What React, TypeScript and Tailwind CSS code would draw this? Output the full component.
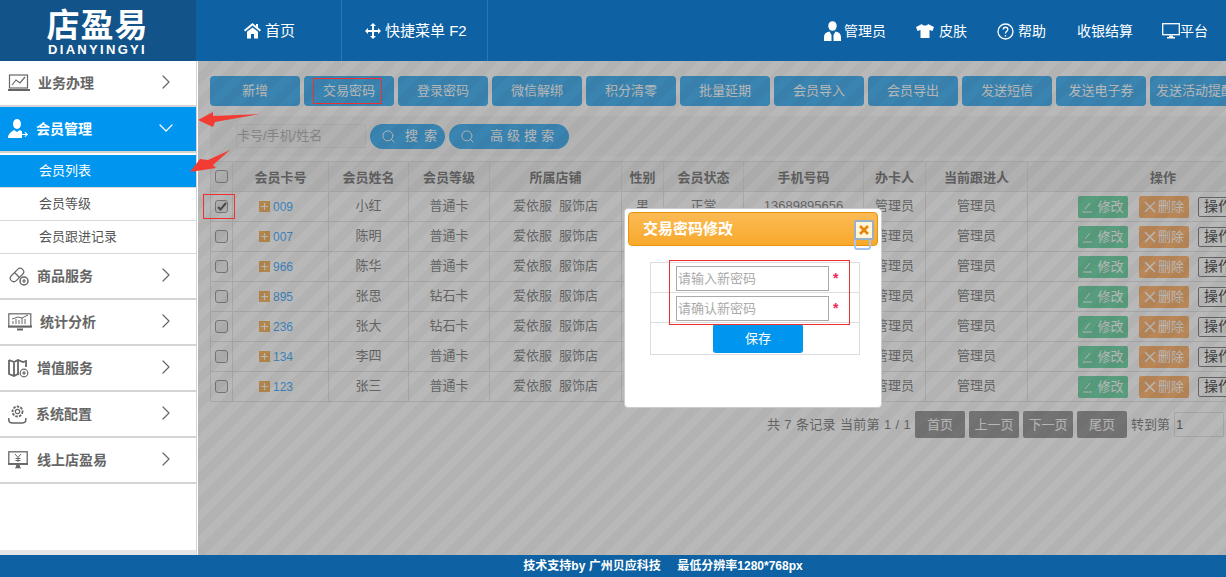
import React from "react";
import { ChevronRight, ChevronDown, Search } from "lucide-react";

const font = "font-['Liberation_Sans','Noto_Sans_CJK_SC',sans-serif]";

const HomeI = () => (
  <svg width="17" height="16" viewBox="0 0 17 16" fill="white"><path d="M8.5 0 0 7l1.2 1.4L8.5 2.6l7.3 5.8L17 7l-3-2.5V1h-2v1.9z" /><path d="M8.5 4.4 3 8.8V15.5h4V11h3v4.5h4V8.8z" /></svg>
);
const MoveI = () => (
  <svg width="16" height="16" viewBox="0 0 16 16" fill="white"><path d="M8 0 5 3h2v4H3V5L0 8l3 3V9h4v4H5l3 3 3-3H9V9h4v2l3-3-3-3v2H9V3h2z" /></svg>
);
const AdminI = () => (
  <svg width="17" height="20" viewBox="0 0 17 20" fill="white"><ellipse cx="8.5" cy="5" rx="4.2" ry="4.8" /><path d="M0 20v-4c0-3 2-5 5.5-5.5L7.5 14v6zM17 20v-4c0-3-2-5-5.5-5.5L9.500 14v6z" /></svg>
);
const ShirtI = () => (
  <svg width="18" height="14" viewBox="0 0 18 14" fill="white"><path d="M6 0 0 3l1.500 4L4.500 6v8h9V6l3 1L18 3l-6-3c-.5 2-5.500 2-6 0z" /></svg>
);
const HelpI = () => (
  <svg width="17" height="17" viewBox="0 0 17 17" fill="none" stroke="white"><circle cx="8.500" cy="8.500" r="7.500" strokeWidth="1.300" /><path d="M6.200 6.500c.2-3 4.600-3 4.600 0 0 1.800-2.300 1.800-2.300 4M8.500 12v1.500" strokeWidth="1.300" /></svg>
);
const MonitorI = () => (
  <svg width="18" height="16" viewBox="0 0 18 16" fill="none" stroke="white"><rect x=".7" y=".7" width="16.600" height="11" strokeWidth="1.300" /><path d="M7 12.500h4v1.500h2v1.500H5V14h2z" fill="white" stroke="none" /></svg>
);

const s = { fill: "none", stroke: "#666", strokeWidth: 1.2 };
const ChartI = () => (
  <svg width="22" height="18" viewBox="0 0 22 18" {...s}><rect x="1.500" y="1" width="18" height="13" /><path d="M4 11l4-5 4 3 5-6" /><path d="M0 16h22" strokeWidth="2" /></svg>
);
const MemberI = () => (
  <svg width="20" height="20" viewBox="0 0 20 20" fill="white"><ellipse cx="9" cy="5" rx="4" ry="5" /><path d="M0 19c0-4 3-6 6-8l3 2 3-2 2 1.500V19z" /><path d="M14 15h4l-1.500-1.500.7-.7L20 15.500 17.200 18l-.7-.7 1.500-1.300h-4z" /></svg>
);
const PillI = () => (
  <svg width="21" height="20" viewBox="0 0 21 20" {...s}>
    <rect x="1" y="5.500" width="16" height="7" rx="3.500" transform="rotate(-45 9 9)" />
    <path d="M6.500 6.500l5 5" />
    <circle cx="16" cy="15" r="4" fill="white" strokeWidth="1.500" />
    <path d="M16 13v4M14 15h4" />
  </svg>
);
const ScreenI = () => (
  <svg width="24" height="18" viewBox="0 0 24 18" {...s}><rect x=".8" y=".8" width="22" height="13" /><path d="M5 11V8M8 11V6M11 11V7M14 11V5M17 11V6M4 6l6-2 4 1 6-3" strokeWidth="1" /><path d="M0 13.500h24" strokeWidth="2" /><path d="M9 16.500h6" strokeWidth="2" /></svg>
);
const MapI = () => (
  <svg width="21" height="20" viewBox="0 0 21 20" fill="none" stroke="#666" strokeWidth="1.800"><path d="M1 2l5 2 4-2 5 2 3-1v6M1 2v14l5 2 4-2 1 .5M6 4v14M10 2v14" /><circle cx="16" cy="15" r="3.800" fill="white" strokeWidth="1.200" /><path d="M16 13v4M14 15h4" strokeWidth="1.200" /></svg>
);
const GearI = () => (
  <svg width="19" height="19" viewBox="0 0 19 19" {...s}><circle cx="9.500" cy="6.500" r="2.200" /><circle cx="9.500" cy="6.500" r="5" strokeDasharray="2.500 1.200" strokeWidth="1.800" /><path d="M.8 13v2c0 2 2 3 4 3h9c2 0 4-1 4-3v-2" strokeWidth="1.500" /></svg>
);
const YenI = () => (
  <svg width="20" height="18" viewBox="0 0 20 18" fill="none" stroke="#666" strokeWidth="1.300"><rect x=".8" y=".8" width="18.400" height="12" /><path d="M0 13h20" strokeWidth="1.800" /><path d="M7 3l3 3.500L13 3M10 6.500V11M7.500 7.500h5M7.500 9.500h5" strokeWidth="1" /><path d="M7 16.800h6M8.500 14.500h3v2h-3z" fill="#666" strokeWidth="1" /></svg>
);

const NavItem = ({ icon, label, gap, active }: { icon: React.ReactNode; label: string; gap: string; active?: boolean }) => (
  <div className={`h-[46px] shrink-0 flex items-center border-b-2 border-[#d4d4d4] pl-2 pr-[18px] ${active ? "bg-[#0096f0] text-white" : "text-[#666]"}`}>
    <span className="w-[24px] flex justify-start">{icon}</span>
    <span className={`${gap} flex-1 text-[14px] font-bold leading-none`}>{label}</span>
    <span className="mb-[3px]">
      {active ? <ChevronDown size={24} strokeWidth={1.200} color="white" /> : <ChevronRight size={24} strokeWidth={1.200} color="#666" />}
    </span>
  </div>
);

const SubItem = ({ label, active }: { label: string; active?: boolean }) => (
  <div className={`h-[33px] shrink-0 flex items-center pl-[39px] text-[13px] border-b border-[#d9d9d9] ${active ? "bg-[#0096f0] text-white border-[#0096f0]" : "text-[#555]"}`}>{label}</div>
);

const toolbar = ["新增", "交易密码", "登录密码", "微信解绑", "积分清零", "批量延期", "会员导入", "会员导出", "发送短信", "发送电子券", "发送活动提醒"];
const heads = ["会员卡号", "会员姓名", "会员等级", "所属店铺", "性别", "会员状态", "手机号码", "办卡人", "当前跟进人", "操作"];
const rows = [
  ["009", "小红", "普通卡"],
  ["007", "陈明", "普通卡"],
  ["966", "陈华", "普通卡"],
  ["895", "张思", "钻石卡"],
  ["236", "张大", "钻石卡"],
  ["134", "李四", "普通卡"],
  ["123", "张三", "普通卡"],
];

const Box = ({ checked }: { checked?: boolean }) => (
  <span className="mx-auto flex w-[13px] h-[13px] items-center justify-center rounded-[3px] border border-[#777] bg-[#ececec]">
    {checked && (
      <svg width="10" height="9" viewBox="0 0 10 9"><path d="M1 5l2.500 2.500L9 1" fill="none" stroke="#222" strokeWidth="2" /></svg>
    )}
  </span>
);

const Pager = ({ label }: { label: string }) => (
  <span className="w-[50px] h-[27px] flex items-center justify-center rounded-[2px] bg-[#747474] text-white text-[13px]">{label}</span>
);

const cell = "border border-[#ddd] text-center pb-[2px]";

export default function App() {
  return (
    <div className={`${font} w-[1226px] h-[577px] flex flex-col overflow-hidden bg-white`}>
      <header className="h-[61px] shrink-0 flex bg-[#0e62a3] text-white text-[14px]">
        <div className="w-[196px] bg-[#125389] flex flex-col items-center pr-[1px] pt-[7px]">
          <span className="text-[33px] font-bold leading-[37px] tracking-[1px]">店盈易</span>
          <span className="text-[13px] font-bold leading-[11px] tracking-[2.300px]">DIANYINGYI</span>
        </div>
        <div className="w-[146px] h-full flex items-center border-r border-[#2a77b3] pl-[48px]">
          <HomeI /><span className="ml-[4px] text-[15px] pt-[1px]">首页</span>
        </div>
        <div className="w-[146px] h-full flex items-center border-r border-[#2a77b3] pl-[23px]">
          <MoveI /><span className="ml-[4px] text-[15px] pt-[1px] whitespace-nowrap">快捷菜单 F2</span>
        </div>
        <div className="flex-1 flex items-center justify-end pr-[18px] pt-[1px]">
          <AdminI /><span className="ml-[3px]">管理员</span>
          <span className="ml-[30px]"><ShirtI /></span><span className="ml-[5px]">皮肤</span>
          <span className="ml-[30px]"><HelpI /></span><span className="ml-[4px]">帮助</span>
          <span className="ml-[31px]">收银结算</span>
          <span className="ml-[29px]"><MonitorI /></span><span>平台</span>
        </div>
      </header>

      <div className="flex-1 min-h-0 flex relative">
        <aside className="w-[198px] shrink-0 flex flex-col border-r-2 border-r-white">
          <div className="w-[197px] flex-1 flex flex-col border-r border-[#d4d4d4]">
            <NavItem icon={<ChartI />} label="业务办理" gap="ml-[6px]" />
            <NavItem icon={<MemberI />} label="会员管理" gap="ml-[4px]" active />
            <div className="h-[2px] shrink-0" />
            <SubItem label="会员列表" active />
            <SubItem label="会员等级" />
            <SubItem label="会员跟进记录" />
            <NavItem icon={<PillI />} label="商品服务" gap="ml-[5px]" />
            <NavItem icon={<ScreenI />} label="统计分析" gap="ml-[8px]" />
            <NavItem icon={<MapI />} label="增值服务" gap="ml-[5px]" />
            <NavItem icon={<GearI />} label="系统配置" gap="ml-[4px]" />
            <NavItem icon={<YenI />} label="线上店盈易" gap="ml-[5px]" />
            <div className="flex-1" />
            <div className="h-[5px] bg-[#e6e6e6]" />
          </div>
        </aside>

        <main className="flex-1 min-w-0 relative overflow-hidden">
          <div className="w-[1100px] pl-[12px] flex flex-col">
            <div className="h-[55px] flex items-start gap-[4px] pt-[15px]">
              {toolbar.map((t) => (
                <span key={t} className="w-[90px] h-[30px] shrink-0 flex items-center justify-center rounded-[4px] bg-[#0096f0] text-white text-[13px] whitespace-nowrap overflow-hidden">{t}</span>
              ))}
            </div>
            <div className="h-[40px] bg-[#f4f4f4] flex items-center pl-[26px]">
              <span className="w-[130px] h-[24px] flex items-center bg-[#f0f0f0] border border-[#e3e3e3] text-[#999] text-[13px]">卡号/手机/姓名</span>
              <span className="ml-[4px] w-[75px] h-[25px] flex items-center rounded-full bg-[#0096f0] text-white text-[13px] pl-[11px]">
                <Search size={15} strokeWidth={1.500} /><span className="ml-[9px] tracking-[6px]">搜索</span>
              </span>
              <span className="ml-[4px] w-[120px] h-[25px] flex items-center rounded-full bg-[#0096f0] text-white text-[13px] pl-[11px]">
                <Search size={15} strokeWidth={1.500} /><span className="ml-[15px] tracking-[4px] whitespace-nowrap">高级搜索</span>
              </span>
            </div>
            <div className="h-[5px] bg-[#fafafa]" />
            <table className="table-fixed border-collapse w-[1088px] text-[13px] text-[#555]">
              <colgroup>
                <col className="w-[22px]" /><col className="w-[96px]" /><col className="w-[80px]" /><col className="w-[81px]" /><col className="w-[132px]" /><col className="w-[42px]" /><col className="w-[80px]" /><col className="w-[120px]" /><col className="w-[62px]" /><col className="w-[102px]" /><col className="w-[271px]" />
              </colgroup>
              <thead>
                <tr className="h-[30px] bg-[#f0f0f0]">
                  <th className="border border-[#ddd]"><Box /></th>
                  {heads.map((h) => (
                    <th key={h} className="border border-[#ddd] pt-[2px] font-bold text-[#4a4a4a]">{h}</th>
                  ))}
                </tr>
              </thead>
              <tbody>
                {rows.map((r, i) => (
                  <tr key={r[0]} className="h-[30px]">
                    <td className="border border-[#ddd]"><Box checked={i === 0} /></td>
                    <td className="border border-[#ddd]">
                      <span className="flex items-center pl-[26px]">
                        <span className="w-[11px] h-[11px] bg-[#f59a23] flex items-center justify-center">
                          <svg width="9" height="9" viewBox="0 0 9 9"><path d="M4.500 1v7M1 4.500h7" stroke="white" strokeWidth="1.200" /></svg>
                        </span>
                        <span className="ml-[3px] text-[#0090ff] text-[12px]">{r[0]}</span>
                      </span>
                    </td>
                    <td className={cell}>{r[1]}</td>
                    <td className={cell}>{r[2]}</td>
                    <td className={cell}>爱依服&nbsp;&nbsp;服饰店</td>
                    <td className={cell}>男</td>
                    <td className={cell}>正常</td>
                    <td className={cell}>13689895656</td>
                    <td className={cell}>管理员</td>
                    <td className={cell}>管理员</td>
                    <td className="border border-[#ddd]">
                      <span className="flex items-center pl-[50px]">
                        <span className="w-[50px] h-[22px] flex items-center justify-center rounded-[2px] bg-[#3cc889] text-white"><svg width="12" height="12" viewBox="0 0 12 12" className="mr-[3px]"><path d="M1 11h9M3 8l5-6" stroke="white" fill="none" /></svg>修改</span>
                        <span className="ml-[11px] w-[50px] h-[22px] flex items-center justify-center rounded-[2px] bg-[#ff9a3c] text-white"><svg width="12" height="12" viewBox="0 0 12 12" className="mr-[2px]"><path d="M1 1l10 10M11 1L1 11" stroke="white" strokeWidth="1.500" fill="none" /></svg>删除</span>
                        <span className="ml-[9px] w-[40px] h-[20px] flex items-center justify-center rounded-[2px] border border-[#555] bg-white text-black text-[14px] whitespace-nowrap">操作</span>
                      </span>
                    </td>
                  </tr>
                ))}
              </tbody>
            </table>
            <div className="mt-[9px] pr-[74px] flex items-center justify-end gap-[4px] w-[1088px] text-[13px] text-[#555]">
              <span className="whitespace-nowrap tracking-[0.35px]">共 7 条记录 当前第 1 / 1</span>
              <Pager label="首页" /><Pager label="上一页" /><Pager label="下一页" /><Pager label="尾页" />
              <span className="whitespace-nowrap">转到第</span>
              <span className="w-[50px] h-[25px] flex items-center border border-[#ddd] pl-[1px] text-[#333]">1</span>
            </div>
          </div>
          <div className="absolute inset-0 bg-[repeating-linear-gradient(135deg,rgba(114,114,114,0.5)_0,rgba(114,114,114,0.5)_8.84px,rgba(108,108,108,0.52)_8.84px,rgba(108,108,108,0.52)_17.68px)]" />
        </main>

        {/* dialog */}
        <div className="absolute left-[624px] top-[147px] w-[258px] h-[200px] bg-white rounded-[4px] border border-[#ccc] p-[3px]">
          <div className="relative h-[34px] rounded-[4px] border border-[#e8930c] bg-[linear-gradient(#fbbb55,#f8a92c)] flex items-center pl-[14px] text-white font-bold text-[15px]">
            交易密码修改
            <span className="absolute right-[3px] top-[7px] w-[20px] h-[20px] border-2 border-[#9ab0c8] rounded-[2px] bg-[#fff6d8] flex items-center justify-center z-10">
              <svg width="10" height="10" viewBox="0 0 10 10"><path d="M1 1l8 8M9 1L1 9" stroke="#e8830c" strokeWidth="2.500" /></svg>
            </span>
            <span className="absolute right-[6px] top-[20px] w-[17px] h-[17px] border-2 border-[#a6c4ee] rounded-[3px] bg-transparent" />
          </div>
          <div className="mt-[16px] ml-[22px] w-[210px] border border-[#ddd]">
            <div className="h-[30px] flex items-center pl-[25px] pt-[2px] border-b border-[#ddd]">
              <span className="w-[153px] h-[25px] border border-[#aaa] flex items-center pl-[1px] text-[13px] text-[#aaa]">请输入新密码</span>
              <span className="ml-[4px] text-[#f0245c] text-[14px] font-bold">*</span>
            </div>
            <div className="h-[30px] flex items-center pl-[25px] pt-[2px] border-b border-[#ddd]">
              <span className="w-[153px] h-[25px] border border-[#aaa] flex items-center pl-[1px] text-[13px] text-[#aaa]">请确认新密码</span>
              <span className="ml-[4px] text-[#f0245c] text-[14px] font-bold">*</span>
            </div>
            <div className="h-[31px] flex justify-center pl-[6px] pt-[1px]">
              <span className="w-[90px] h-[29px] flex items-center justify-center rounded-[3px] bg-[#0096f0] text-white text-[13px]">保存</span>
            </div>
          </div>
        </div>

        {/* annotations */}
        <span className="absolute left-[313px] top-[17px] w-[69px] h-[26px] border border-[#f03030]" />
        <span className="absolute left-[203px] top-[133px] w-[32px] h-[25px] border border-[#f03030]" />
        <span className="absolute left-[669px] top-[199px] w-[181px] h-[65px] border border-[#f03030]" />
        <svg className="absolute left-[185px] top-[50px]" width="80" height="70" viewBox="0 0 80 70">
          <path d="M13 9 28 1v4l47-2-45 8-2 5z" fill="#f23b32" />
          <path d="M5 61 15 48l8 1 22-10-17 15 3 3z" fill="#f23b32" />
        </svg>
      </div>

      <footer className="h-[22px] shrink-0 bg-[#0e62a3] text-white text-[12px] font-bold flex items-center justify-center pl-[100px]">
        技术支持by 广州贝应科技&nbsp;&nbsp;&nbsp;&nbsp;&nbsp;最低分辨率1280*768px
      </footer>
    </div>
  );
}
